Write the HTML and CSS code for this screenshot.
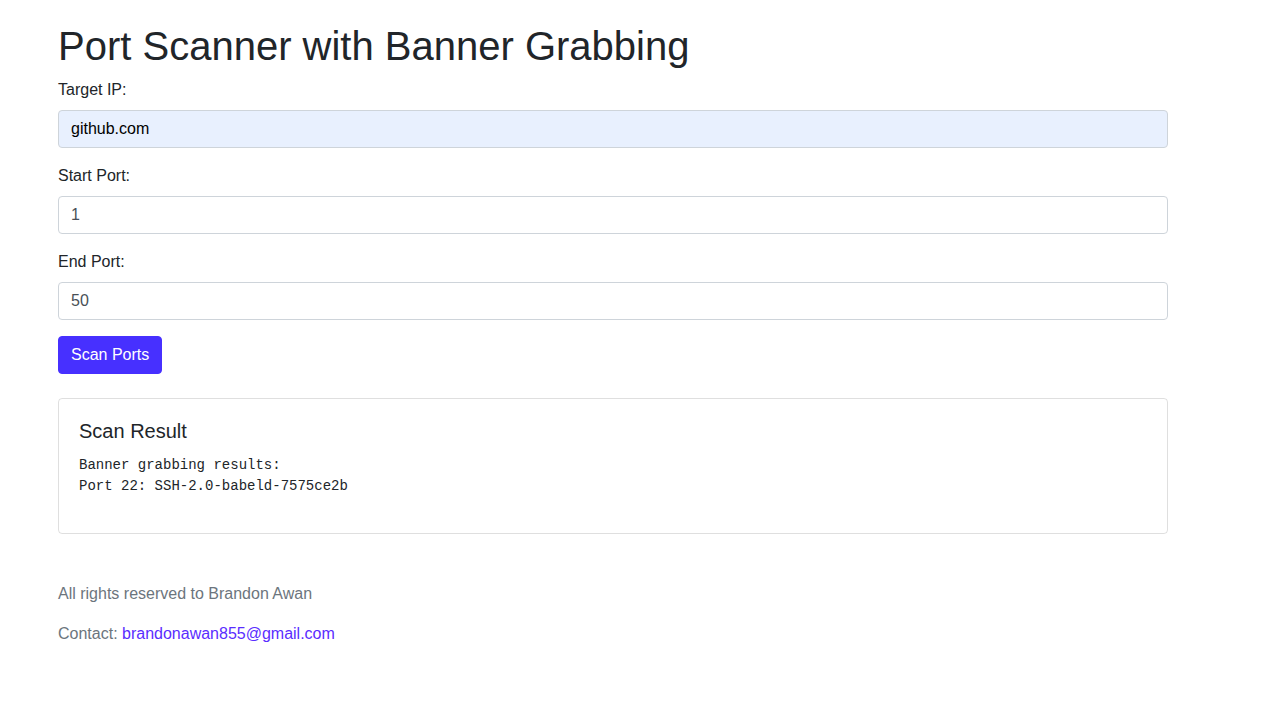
FILE: index.html
```html
<!DOCTYPE html>
<html lang="en">
<head>
<meta charset="utf-8">
<title>Port Scanner with Banner Grabbing</title>
<link rel="stylesheet" href="styles.css">
</head>
<body>
<div class="container">
  <h1 class="title">Port Scanner with Banner Grabbing</h1>
  <form class="scan-form">
    <div class="form-group">
      <label class="label" for="ip">Target IP:</label>
      <input class="input input-filled" id="ip" type="text" value="github.com">
    </div>
    <div class="form-group">
      <label class="label" for="start">Start Port:</label>
      <input class="input" id="start" type="text" value="1">
    </div>
    <div class="form-group">
      <label class="label" for="end">End Port:</label>
      <input class="input" id="end" type="text" value="50">
    </div>
    <button class="btn" type="button">Scan Ports</button>
  </form>
  <div class="card">
    <div class="card-body">
      <h5 class="card-title">Scan Result</h5>
      <pre class="result">Banner grabbing results:
Port 22: SSH-2.0-babeld-7575ce2b</pre>
    </div>
  </div>
  <footer class="footer">
    <p class="footer-line">All rights reserved to Brandon Awan</p>
    <p class="footer-line">Contact: <a class="link" href="#">brandonawan855@gmail.com</a></p>
  </footer>
</div>
</body>
</html>
```
FILE: styles.css
```css
* { box-sizing: border-box; }
html, body { margin: 0; padding: 0; background: #fff; }
body {
  font-family: "Liberation Sans", Arial, Helvetica, sans-serif;
  font-size: 16px;
  line-height: 1.5;
  color: #212529;
}
.container {
  width: 1110px;
  margin-left: 58px;
  padding-top: 22px;
}
.title {
  font-size: 40px;
  font-weight: 500;
  line-height: 1.2;
  margin: 0 0 8px 0;
}
.scan-form { margin: 0; }
.form-group { margin-bottom: 16px; }
.label {
  display: block;
  margin-bottom: 8px;
}
.input {
  display: block;
  width: 100%;
  height: 38px;
  padding: 6px 12px;
  font-family: inherit;
  font-size: 16px;
  line-height: 1.5;
  color: #495057;
  background: #fff;
  border: 1px solid #ced4da;
  border-radius: 4px;
}
.input-filled {
  background: #e8f0fe;
  color: #000;
}
.btn {
  display: inline-block;
  height: 38px;
  padding: 6px 12px;
  font-family: inherit;
  font-size: 16px;
  line-height: 1.5;
  color: #fff;
  background: #4730ff;
  border: 1px solid #4730ff;
  border-radius: 4px;
}
.card {
  margin-top: 24px;
  border: 1px solid rgba(0,0,0,0.125);
  border-radius: 4px;
}
.card-body { padding: 20px; }
.card-title {
  font-size: 20px;
  font-weight: 500;
  line-height: 1.2;
  margin: 0 0 12px 0;
}
.result {
  font-family: "Liberation Mono", "Courier New", monospace;
  font-size: 14px;
  line-height: 1.5;
  margin: 0 0 16px 0;
  color: #212529;
}
.footer {
  margin-top: 48px;
  color: #6c757d;
}
.footer-line { margin: 0 0 16px 0; }
.link {
  color: #5a2dff;
  text-decoration: none;
}
```
